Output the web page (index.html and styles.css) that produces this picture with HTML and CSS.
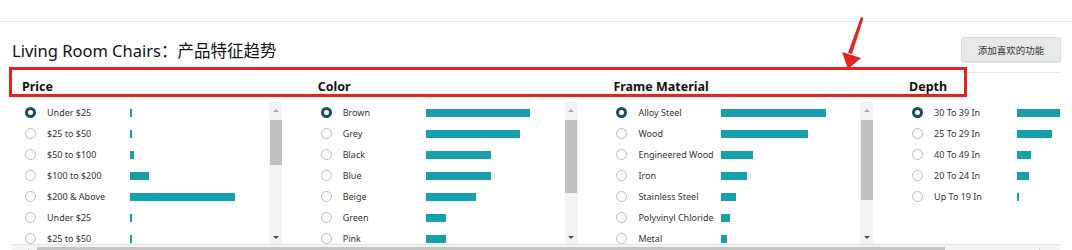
FILE: index.html
```html
<!DOCTYPE html>
<html lang="en">
<head>
  <meta charset="UTF-8" />
  <title>Living Room Chairs - 产品特征趋势</title>
  <link rel="stylesheet" href="styles.css">
</head>
<body>
  <div class="topbar"></div>

  <div class="panel">
    <div class="head">
      <h1>Living Room Chairs：产品特征趋势</h1>
      <div class="actions">
        <button class="addBtn">添加喜欢的功能</button>
      </div>
    </div>

    <div class="cols">
      <div class="col">
        <h2>Price</h2>
        <div class="list">
          <ul class="rows">
            <li><span class="radio on"></span><span class="label">Under $25</span><span class="bar" style="width:2px"></span></li>
            <li><span class="radio"></span><span class="label">$25 to $50</span><span class="bar" style="width:2px"></span></li>
            <li><span class="radio"></span><span class="label">$50 to $100</span><span class="bar" style="width:4px"></span></li>
            <li><span class="radio"></span><span class="label">$100 to $200</span><span class="bar" style="width:19px"></span></li>
            <li><span class="radio"></span><span class="label">$200 &amp; Above</span><span class="bar" style="width:105px"></span></li>
            <li><span class="radio"></span><span class="label">Under $25</span><span class="bar" style="width:2px"></span></li>
            <li><span class="radio"></span><span class="label">$25 to $50</span><span class="bar" style="width:2px"></span></li>
          </ul>
          <div class="vscroll">
            <span class="arrow up"></span>
            <span class="thumb" style="height:45px"></span>
            <span class="fill"></span>
            <span class="arrow down"></span>
          </div>
        </div>
      </div>

      <div class="col">
        <h2>Color</h2>
        <div class="list">
          <ul class="rows">
            <li><span class="radio on"></span><span class="label">Brown</span><span class="bar" style="width:104px"></span></li>
            <li><span class="radio"></span><span class="label">Grey</span><span class="bar" style="width:94px"></span></li>
            <li><span class="radio"></span><span class="label">Black</span><span class="bar" style="width:65px"></span></li>
            <li><span class="radio"></span><span class="label">Blue</span><span class="bar" style="width:65px"></span></li>
            <li><span class="radio"></span><span class="label">Beige</span><span class="bar" style="width:50px"></span></li>
            <li><span class="radio"></span><span class="label">Green</span><span class="bar" style="width:20px"></span></li>
            <li><span class="radio"></span><span class="label">Pink</span><span class="bar" style="width:20px"></span></li>
          </ul>
          <div class="vscroll">
            <span class="arrow up"></span>
            <span class="thumb" style="height:73px"></span>
            <span class="fill"></span>
            <span class="arrow down"></span>
          </div>
        </div>
      </div>

      <div class="col">
        <h2>Frame Material</h2>
        <div class="list">
          <ul class="rows">
            <li><span class="radio on"></span><span class="label">Alloy Steel</span><span class="bar" style="width:105px"></span></li>
            <li><span class="radio"></span><span class="label">Wood</span><span class="bar" style="width:87px"></span></li>
            <li><span class="radio"></span><span class="label">Engineered Wood</span><span class="bar" style="width:32px"></span></li>
            <li><span class="radio"></span><span class="label">Iron</span><span class="bar" style="width:26px"></span></li>
            <li><span class="radio"></span><span class="label">Stainless Steel</span><span class="bar" style="width:15px"></span></li>
            <li><span class="radio"></span><span class="label">Polyvinyl Chloride</span><span class="bar" style="width:9px"></span></li>
            <li><span class="radio"></span><span class="label">Metal</span><span class="bar" style="width:6px"></span></li>
          </ul>
          <div class="vscroll">
            <span class="arrow up"></span>
            <span class="thumb" style="height:80px"></span>
            <span class="fill"></span>
            <span class="arrow down"></span>
          </div>
        </div>
      </div>

      <div class="col">
        <h2>Depth</h2>
        <div class="list">
          <ul class="rows">
            <li><span class="radio on"></span><span class="label">30 To 39 In</span><span class="bar" style="width:105px"></span></li>
            <li><span class="radio"></span><span class="label">25 To 29 In</span><span class="bar" style="width:35px"></span></li>
            <li><span class="radio"></span><span class="label">40 To 49 In</span><span class="bar" style="width:14px"></span></li>
            <li><span class="radio"></span><span class="label">20 To 24 In</span><span class="bar" style="width:12px"></span></li>
            <li><span class="radio"></span><span class="label">Up To 19 In</span><span class="bar" style="width:2px"></span></li>
          </ul>
          <div class="vscroll">
            <span class="arrow up"></span>
            <span class="thumb" style="height:90px"></span>
            <span class="fill"></span>
            <span class="arrow down"></span>
          </div>
        </div>
      </div>
    </div>

    <div class="hscroll">
      <span class="harrow left"></span>
      <span class="hthumb"></span>
      <span class="hfill"></span>
      <span class="harrow right"></span>
    </div>
  </div>

  <!-- annotation marks drawn over the screenshot -->
  <div class="markBox"></div>
  <svg class="markArrow" width="36" height="64" viewBox="0 0 36 64">
    <polygon points="26,7 28.5,8 17,44 13,43" fill="#e5231f"/>
    <polygon points="7,42 26,48 13,59" fill="#e5231f"/>
  </svg>
</body>
</html>
```

FILE: styles.css
```css
body { margin: 0; background: #fff; font-family: "Noto Sans", "Noto Sans CJK SC", sans-serif; color: #222; position: relative; height: 250px; overflow: hidden; }
.topbar { height: 21px; border-bottom: 1px solid #e6e6e6; }

.panel { padding: 0 12px; }
.head { display: flex; justify-content: space-between; align-items: flex-start; margin-top: 15px; }
.head h1 { margin: 3px 0 0 0; font-size: 16.5px; font-weight: 400; line-height: 22px; color: #111; }
.actions { width: 100px; padding-bottom: 10px; border-bottom: 1px solid #e7e7e7; margin-right: -1px; }
.addBtn { display: block; width: 100px; height: 25px; padding: 0; border: 1px solid #d9dcdc; border-radius: 3px; background: #e7e9e9; box-shadow: 0 1px 1px rgba(0,0,0,0.12); font-family: "Noto Sans CJK SC", sans-serif; font-size: 9.5px; color: #333; }

.cols { display: flex; overflow: hidden; }
.col { flex: 0 0 270px; margin-right: 25.7px; }
.col h2 { margin: 0; padding-left: 10px; height: 28px; line-height: 28px; font-size: 12.5px; font-weight: 700; color: #111; }

.list { display: flex; height: 142px; margin-top: 1px; }
.rows { flex: 1; list-style: none; margin: 0; padding: 0; overflow: hidden; }
.rows li { display: flex; align-items: center; height: 21px; padding-left: 13px; }
.radio { flex: 0 0 auto; width: 9px; height: 9px; border: 1px solid #b8bcbe; border-radius: 50%; margin-right: 11px; box-sizing: content-box; }
.radio.on { width: 5px; height: 5px; border: 3px solid #1d4d62; }
.label { flex: 0 0 83px; font-size: 9px; line-height: 10px; color: #333; white-space: nowrap; }
.bar { height: 8px; background: #16a0ab; }

.vscroll { flex: 0 0 13px; display: flex; flex-direction: column; align-items: center; background: #f3f3f3; }
.arrow { width: 0; height: 0; box-sizing: border-box; border-left: 3px solid transparent; border-right: 3px solid transparent; }
.arrow.up { margin: 7px 0 8px; border-bottom: 3px solid #a8a8a8; }
.arrow.down { margin: 0 0 5px; border-top: 3px solid #505050; }
.thumb { width: 12px; background: #c1c1c1; }
.fill { flex: 1; }

.hscroll { display: flex; align-items: flex-start; height: 15px; background: #f3f3f3; border-top: 1px solid #e4e4e4; }
.harrow { width: 0; height: 0; margin-top: 4px; border-top: 3px solid transparent; border-bottom: 3px solid transparent; }
.harrow.left { margin-left: 14px; margin-right: 8px; border-right: 3px solid #a8a8a8; }
.harrow.right { margin-left: 8px; margin-right: 18px; border-left: 3px solid #505050; }
.hthumb { width: 908px; height: 12px; margin-top: 2px; background: #c4c4c4; }
.hfill { flex: 1; }

.markBox { position: absolute; left: 9px; top: 67px; width: 958px; height: 30px; border: 3px solid #e5231f; box-sizing: border-box; }
.markArrow { position: absolute; left: 835px; top: 10px; }
```
